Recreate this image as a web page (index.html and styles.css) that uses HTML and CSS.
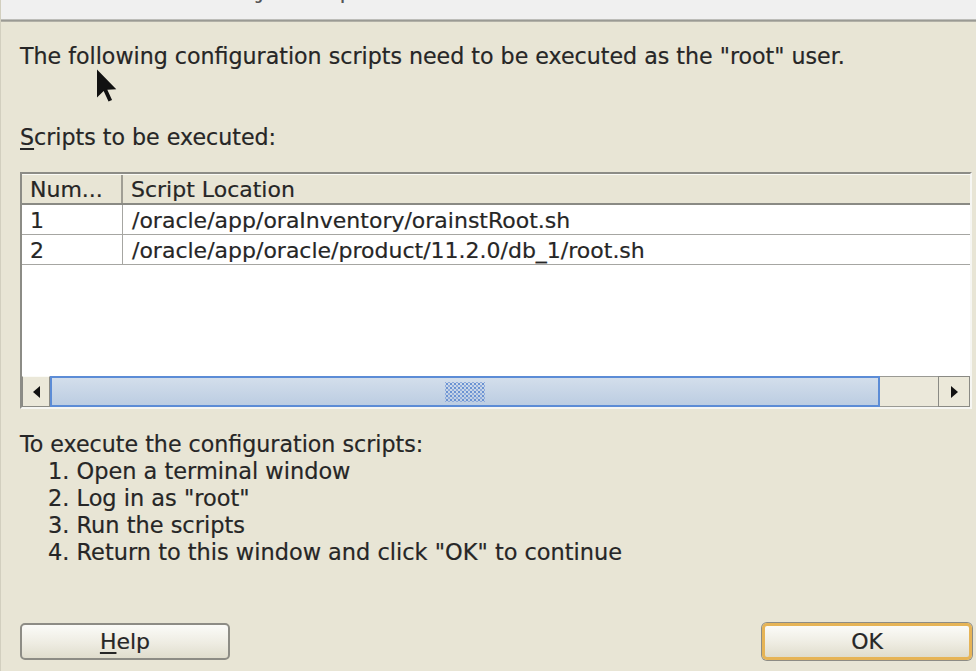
FILE: index.html
```html
<!DOCTYPE html>
<html>
<head>
<meta charset="utf-8">
<link rel="stylesheet" href="styles.css">
</head>
<body>
<div class="window">
  <div class="titlebar"><span class="title">Execute Configuration scripts</span></div>
  <div class="titleedge"></div>
  <div class="content">
    <p class="line first">The following configuration scripts need to be executed as the "root" user.</p>
    <p class="line label"><u>S</u>cripts to be executed:</p>
    <div class="tablebox">
      <div class="row head">
        <div class="cell num">Num...</div>
        <div class="cell loc">Script Location</div>
      </div>
      <div class="row">
        <div class="cell num">1</div>
        <div class="cell loc">/oracle/app/oraInventory/orainstRoot.sh</div>
      </div>
      <div class="row">
        <div class="cell num">2</div>
        <div class="cell loc">/oracle/app/oracle/product/11.2.0/db_1/root.sh</div>
      </div>
      <div class="filler"></div>
      <div class="scrollbar">
        <div class="sbtn left"><span class="tri-left"></span></div>
        <div class="thumb"><span class="grip"></span></div>
        <div class="track"></div>
        <div class="sbtn right"><span class="tri-right"></span></div>
      </div>
    </div>
    <p class="line howto">To execute the configuration scripts:</p>
    <ol class="steps">
      <li>1. Open a terminal window</li>
      <li>2. Log in as "root"</li>
      <li>3. Run the scripts</li>
      <li>4. Return to this window and click "OK" to continue</li>
    </ol>
    <div class="buttons">
      <button class="btn"><u>H</u>elp</button>
      <button class="btn default">OK</button>
    </div>
  </div>
  <svg class="cursor" width="21" height="34" viewBox="0 0 12 19">
    <path d="M0 0 L0 16 L3.8 12.4 L6.6 18.4 L8.6 17.5 L5.9 11.6 L11 11.4 Z" fill="#111"/>
  </svg>
</div>
</body>
</html>
```

FILE: styles.css
```css
html, body {
  margin: 0;
  padding: 0;
}
body {
  background: #e8e5d5;
  font-family: "DejaVu Sans", "Liberation Sans", sans-serif;
  color: #262626;
}
.window {
  position: relative;
  width: 976px;
  height: 671px;
  display: flex;
  flex-direction: column;
  box-sizing: border-box;
  border-left: 1px solid #d2cfbf;
  overflow: hidden;
}
.titlebar {
  height: 19px;
  background: #f0f0f0;
  overflow: hidden;
}
.title {
  display: block;
  padding-left: 161px;
  font-size: 12px;
  font-weight: bold;
  line-height: 12px;
  margin-top: -10px;
  color: #555;
}
.titleedge {
  height: 3px;
  background: linear-gradient(#cfcfcb, #9a9a94, #bdbbb0);
}
.content {
  flex: 1;
  display: flex;
  flex-direction: column;
  padding: 0 4px 11px 19px;
}
.line {
  margin: 0;
  font-size: 22.15px;
  line-height: 27px;
  white-space: nowrap;
  -webkit-text-stroke: 0.2px #262626;
}
.first { margin-top: 21px; }
.label { margin-top: 54px; }
.howto { margin-top: 22px; }
u { text-decoration-thickness: 2px; text-underline-offset: 3px; }

.tablebox {
  margin-top: 21px;
  height: 237px;
  box-sizing: border-box;
  border: 2px solid;
  border-color: #8c8c86 #f6f6f2 #f6f6f2 #8c8c86;
  background: #fff;
  display: flex;
  flex-direction: column;
  font-size: 22px;
}
.row {
  display: grid;
  grid-template-columns: 101px 1fr;
  height: 30px;
  border-bottom: 1px solid #a6a6a2;
  box-sizing: border-box;
}
.row.head {
  height: 31px;
  background: #e8e5d5;
  border-top: 1px solid #fbfbf6;
  border-bottom: 2px solid #8a8a84;
}
.cell {
  line-height: 31px;
  padding-left: 8px;
  white-space: nowrap;
  overflow: hidden;
  -webkit-text-stroke: 0.2px #262626;
}
.head .cell { line-height: 29px; }
.num { border-right: 1px solid #a6a6a2; }
.head .num { border-right: 2px solid #a09e94; }
.loc { padding-left: 9px; }
.head .loc { padding-left: 8px; }
.filler { flex: 1; }

.scrollbar {
  height: 31px;
  display: flex;
  background: #e8e5d5;
}
.sbtn {
  box-sizing: border-box;
  display: flex;
  align-items: center;
  justify-content: center;
  background: #ebe8d9;
  border: 1px solid;
  border-color: #fbfbf7 #8a8a84 #8a8a84 #fbfbf7;
}
.sbtn.left { width: 28px; border-left-color: #8a8a84; }
.sbtn.right { width: 32px; border-color: #8a8a84; }
.tri-left {
  width: 0; height: 0;
  border-top: 6px solid transparent;
  border-bottom: 6px solid transparent;
  border-right: 7px solid #111;
}
.tri-right {
  width: 0; height: 0;
  border-top: 6px solid transparent;
  border-bottom: 6px solid transparent;
  border-left: 7px solid #111;
}
.thumb {
  width: 830px;
  box-sizing: border-box;
  border: 2px solid #5c8cd6;
  background: linear-gradient(#d3deeb, #bccde2);
  display: flex;
  align-items: center;
  justify-content: center;
}
.grip {
  width: 40px;
  height: 20px;
  background-image:
    radial-gradient(circle, #6a92d2 1px, transparent 1.4px),
    radial-gradient(circle, #8eaadc 1px, transparent 1.4px);
  background-size: 4px 4px, 4px 4px;
  background-position: 0 0, 2px 2px;
}
.track {
  flex: 1;
  box-sizing: border-box;
  border-top: 1px solid #9a9a94;
  border-bottom: 1px solid #9a9a94;
  background: #ebe8da;
}

.steps {
  list-style: none;
  margin: 0;
  padding: 0 0 0 28px;
  font-size: 22.45px;
  line-height: 27px;
  white-space: nowrap;
  -webkit-text-stroke: 0.2px #262626;
}
.buttons {
  margin-top: auto;
  display: flex;
  justify-content: space-between;
}
.btn {
  width: 210px;
  height: 37px;
  box-sizing: border-box;
  border: 2px solid #8d8c85;
  border-radius: 5px;
  background: linear-gradient(#fbfbf8, #eeece2 55%, #e0ddcd);
  font-family: "DejaVu Sans", "Liberation Sans", sans-serif;
  font-size: 22px;
  color: #262626;
  padding: 0;
  line-height: 30px;
  -webkit-text-stroke: 0.2px #262626;
}
.btn.default {
  border: 3px solid #e6b456;
  box-shadow: 0 0 0 1px #8d8c85;
}
.cursor {
  position: absolute;
  left: 96px;
  top: 69px;
}
```
